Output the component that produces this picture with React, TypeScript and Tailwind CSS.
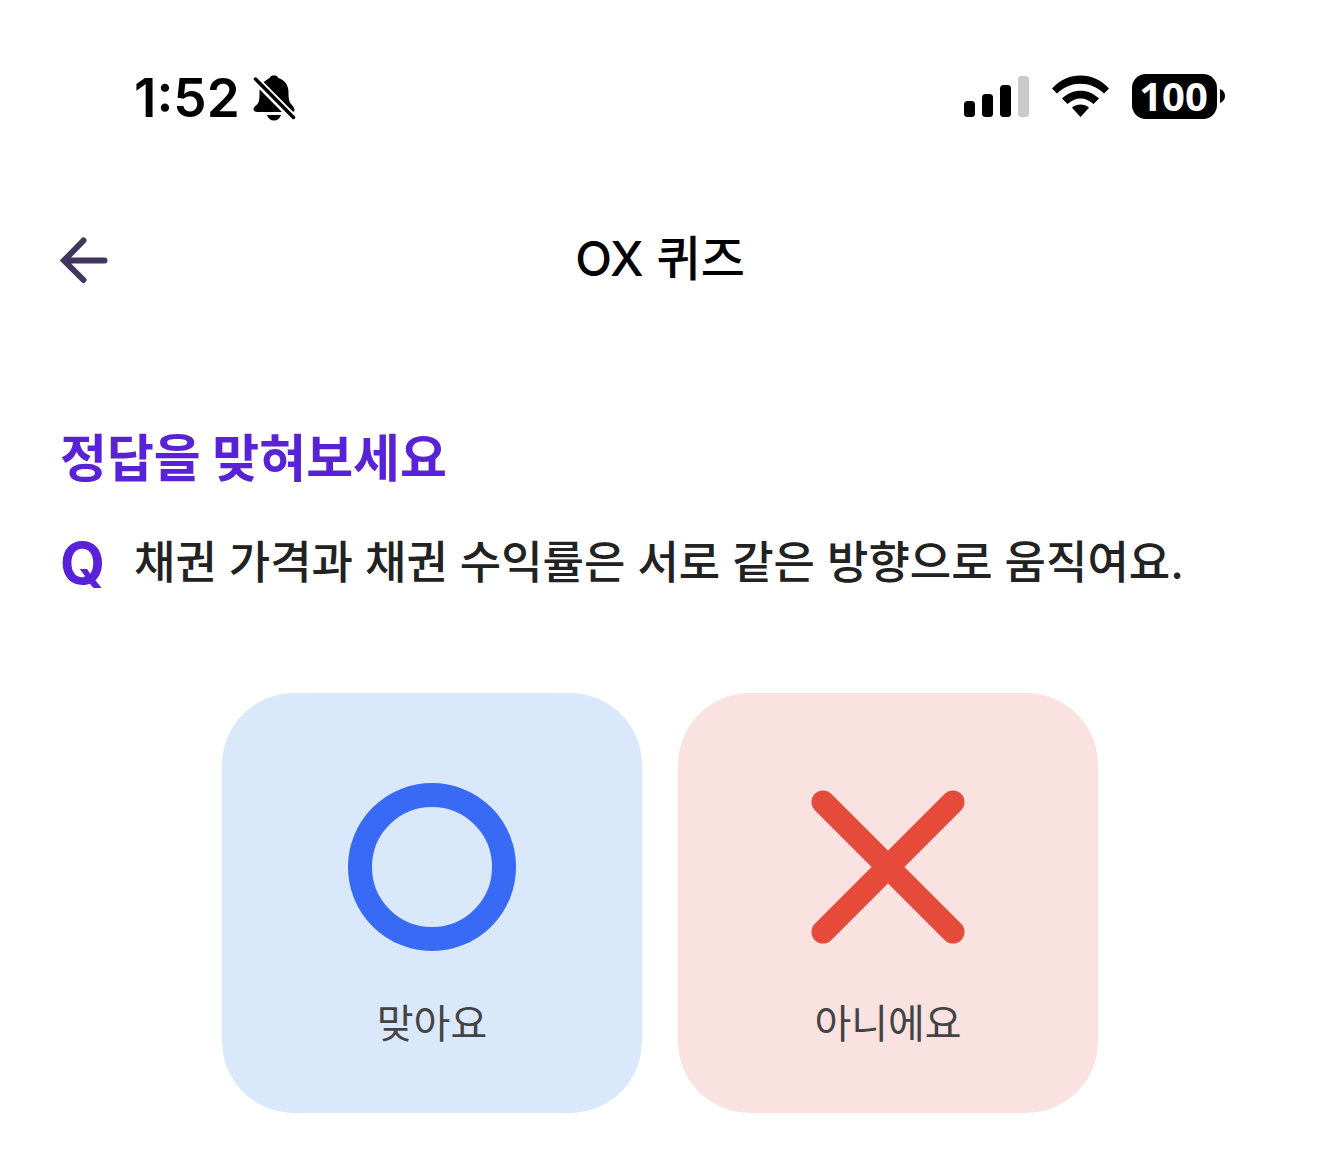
import React from 'react';

interface AnswerButtonProps {
  label: string;
  className: string;
  children: React.ReactNode;
}

const StatusBar: React.FC = () => {
  return (
    <div className="flex h-48 items-center justify-between pl-[134px] pr-[95px] text-black">
      <div className="flex items-center gap-3 pt-1">
        <span className="text-[53px] leading-16 font-semibold">1:52</span>
        <svg className="h-12 w-11" viewBox="0 0 44 48" aria-label="무음">
          <path
            fill="currentColor"
            d="M13 7C15 5.500 16.500 4.800 17.500 4C18.500 2 20 1.500 22 1.500C24 1.500 25.500 2 26.500 4C33 6.500 36.500 11 36.500 18C36.500 25 37 28 39.500 30.500C41.500 33 42.500 34 42.500 36C42.500 37.500 41.500 38 40 38H5C3 38 1.500 37 1.500 35.500C1.500 33 3.500 32 5.500 30C7.500 27.500 7.500 24 7.500 18C7.500 14 9 10 13 7Z"
          />
          <path fill="currentColor" d="M15 41H29C28 44.500 25.500 46.500 22 46.500C18.500 46.500 16 44.500 15 41Z" />
          <path d="M2 4L43 45.500" stroke="#fff" strokeWidth="8" />
          <path d="M3.500 5L41.500 43.500" stroke="currentColor" strokeWidth="3.500" strokeLinecap="round" />
        </svg>
      </div>

      <div className="flex items-center">
        <svg className="h-11 w-[66px]" viewBox="0 0 66 44" fill="currentColor" aria-label="신호 세기">
          <rect x="0" y="27" width="11" height="16" rx="3.500" />
          <rect x="18" y="20" width="11" height="23" rx="3.500" />
          <rect x="36" y="11" width="11" height="32" rx="3.500" />
          <rect x="54" y="2" width="11" height="41" rx="3.500" fill="#cbcbcb" />
        </svg>
        <svg className="mx-[22px] h-11 w-[58px]" viewBox="0 0 58 44" fill="currentColor" aria-label="와이파이">
          <path d="M0 14.500C15.500 -2.800 41.500 -2.800 57 14.500L52 19.500C38.500 6.500 18.500 6.500 5 19.500Z" />
          <path d="M10 24.500C20.500 14 36.500 14 47 24.500L41.500 30C33.500 22.500 23.500 22.500 15.500 30Z" />
          <path d="M20 33.800C25 29.400 32 29.400 37 33.800L28.500 43Z" />
        </svg>
        <div className="flex h-[45px] w-[85px] items-center justify-center rounded-[14px] bg-black pr-0.5 font-['Noto_Sans',sans-serif] text-[40px] leading-none font-bold text-white">
          100
        </div>
        <svg className="ml-[3px] h-3.5 w-[5px]" viewBox="0 0 5 14" fill="currentColor" aria-hidden="true">
          <path d="M0 0C3.500 1.500 5 4 5 7C5 10 3.500 12.500 0 14Z" />
        </svg>
      </div>
    </div>
  );
};

const AnswerButton: React.FC<AnswerButtonProps> = ({ label, className, children }) => {
  return (
    <button
      type="button"
      className={`flex aspect-square w-full max-w-[420px] flex-col items-center rounded-[72px] pt-[90px] text-[40px] leading-[60px] text-[#444] ${className}`}
    >
      <svg className="mb-[43px] size-42" viewBox="0 0 168 168" fill="none" strokeLinecap="round" aria-hidden="true">
        {children}
      </svg>
      {label}
    </button>
  );
};

const App: React.FC = () => {
  return (
    <div className="min-h-screen bg-white pb-9 font-['Inter','Noto_Sans_CJK_KR',sans-serif]">
      <StatusBar />

      <header className="grid grid-cols-[1fr_auto_1fr] items-center px-15 pt-[31px]">
        <button type="button" aria-label="뒤로" className="justify-self-start text-[#40365f]">
          <svg className="size-12" viewBox="0 0 48 48" fill="none" stroke="currentColor" strokeWidth="6" strokeLinecap="round">
            <path d="M23.500 5.500L4 25.500L23.500 45M5 25.500H44.500" />
          </svg>
        </button>
        <h1 className="text-[48px] leading-[72px] font-medium text-black">OX 퀴즈</h1>
      </header>

      <main className="px-15 pt-31">
        <h2 className="font-['Noto_Sans_CJK_KR',sans-serif] text-[51px] leading-[72px] font-bold text-[#5a22d6]">
          정답을 맞혀보세요
        </h2>

        <p className="mt-9 flex items-center text-[45px] leading-[72px] font-medium text-[#222]">
          <span className="w-[74px] shrink-0 text-[58px] font-bold text-[#5a22d6]">Q</span>
          채권 가격과 채권 수익률은 서로 같은 방향으로 움직여요.
        </p>

        <div className="mt-[94px] flex justify-center gap-9">
          <AnswerButton label="맞아요" className="bg-[#dae8fc]">
            <circle cx="84" cy="84" r="72" stroke="#386af6" strokeWidth="24" />
          </AnswerButton>
          <AnswerButton label="아니에요" className="bg-[#fae2e1]">
            <path d="M19 19L149 149M149 19L19 149" stroke="#e64a3a" strokeWidth="23" />
          </AnswerButton>
        </div>
      </main>
    </div>
  );
};

export default App;
